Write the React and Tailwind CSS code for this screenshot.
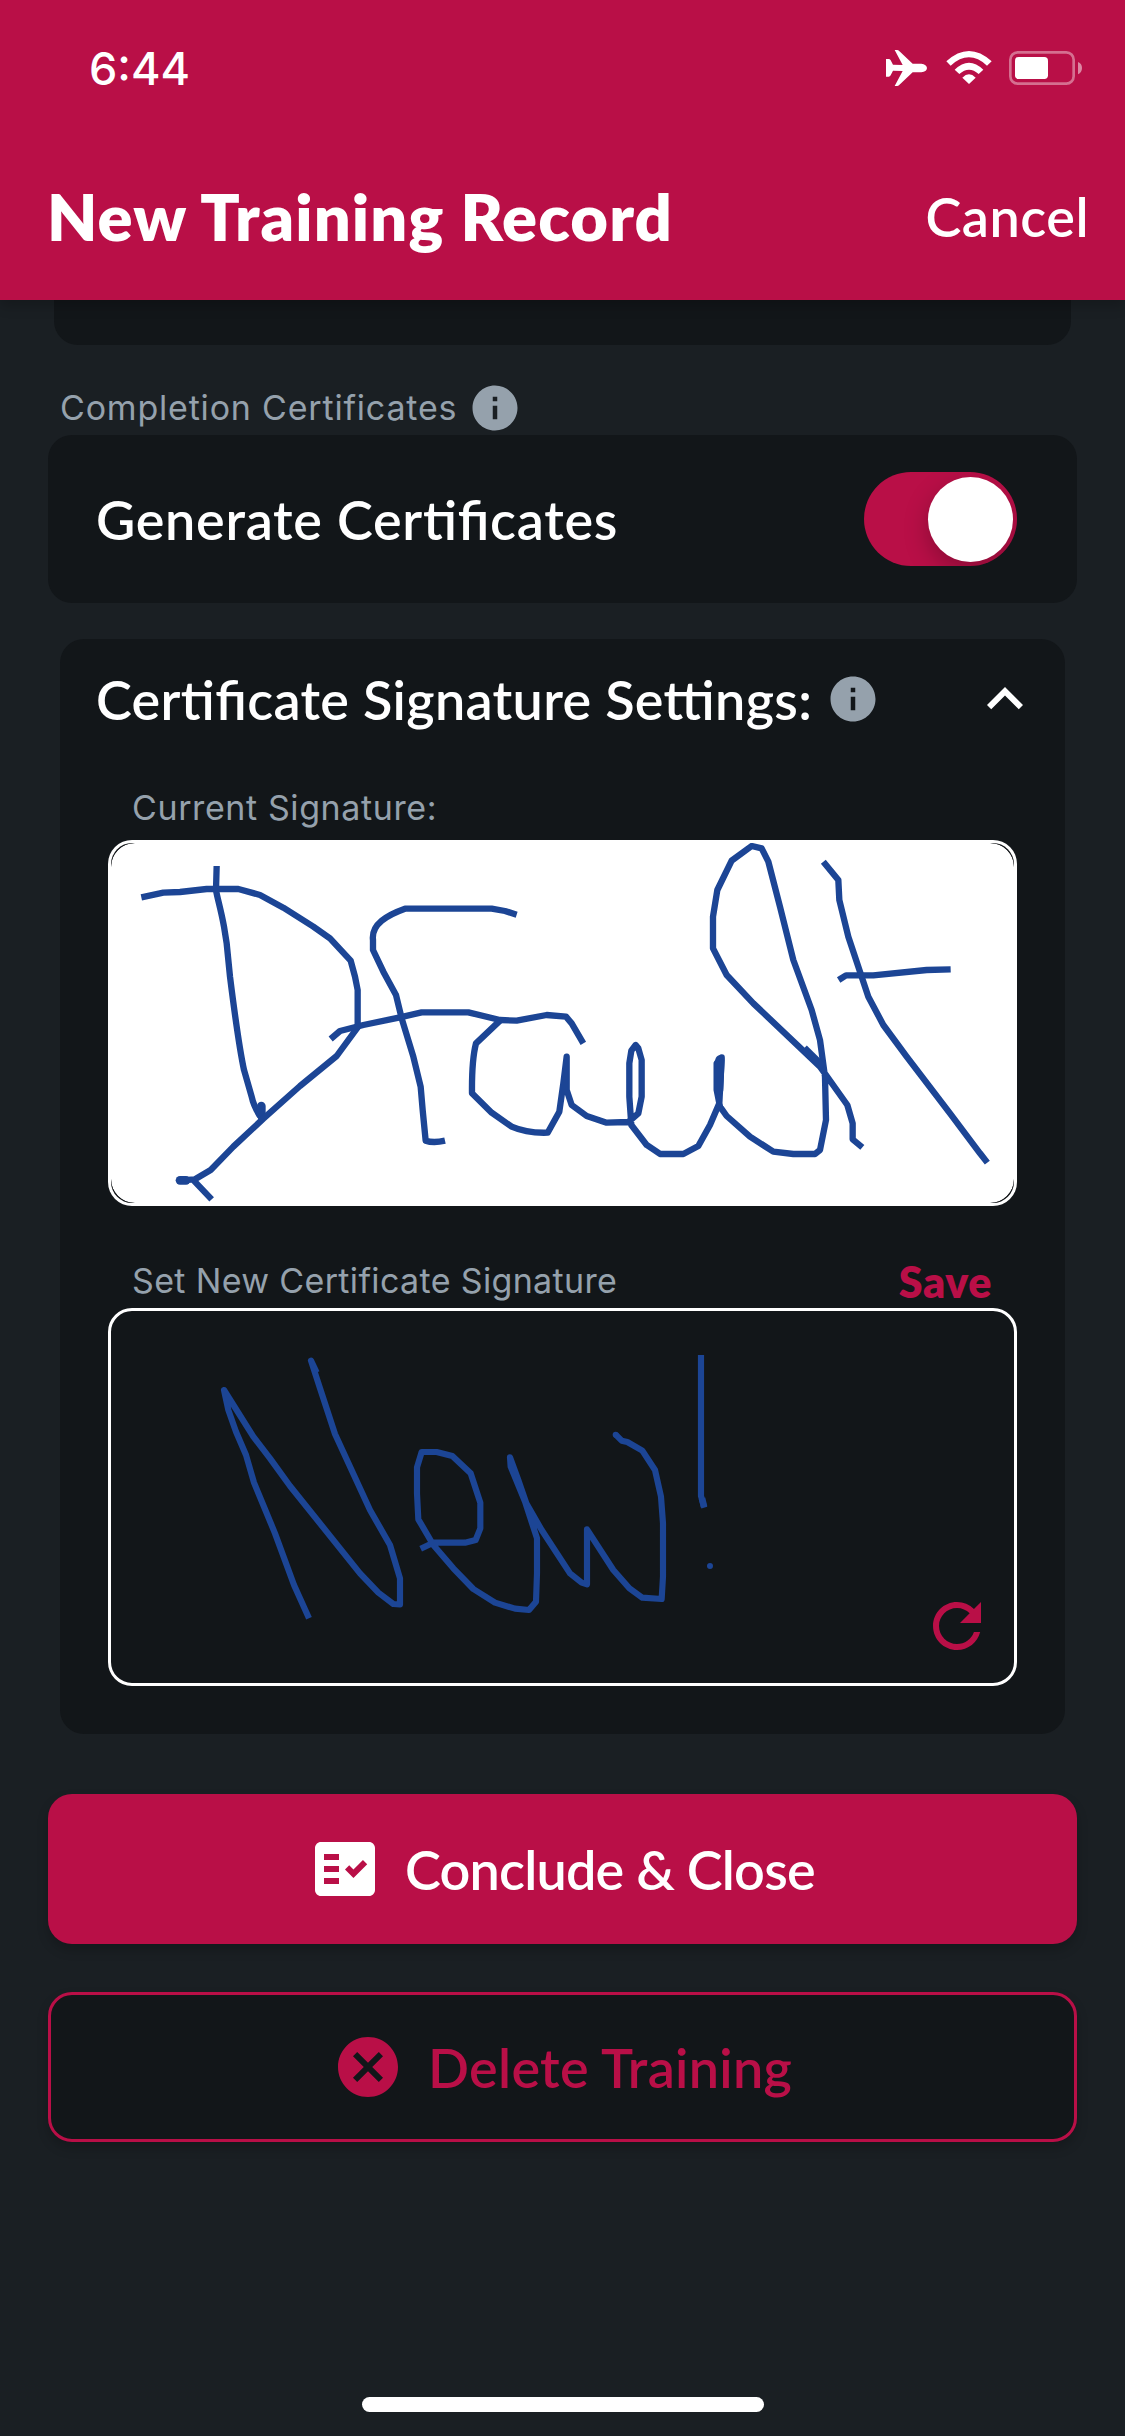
import React from "react";
import { MdInfo, MdRefresh, MdFactCheck, MdCancel } from "react-icons/md";

const heading = "font-['Lato',sans-serif] [font-feature-settings:'liga'_1] pt-[2px]";
const label =
  "font-['Inter',sans-serif] text-[34px] leading-none text-[#95a1ac] whitespace-nowrap";

function StatusIcons() {
  return (
    <svg className="h-[80px] w-[240px]" viewBox="0 0 720 240" fill="#fff">
      <path d="M78 90h8q4 0 6 4l7 13 29 1-24-45h8q4 0 8 5l38 36h26q16 2 17 13-1 11-17 13h-26l-38 36q-4 5-8 5h-8l24-45-29-1-7 14q-2 4-6 4h-8V117z" />
      <path d="M259 97Q327 35 395 97L381 110Q327 60 272 110z" />
      <path d="M284 122Q327 80 370 122L356 135Q327 109 298 135z" />
      <path d="M327 165L307 146Q327 126 347 146z" />
      <rect x="451" y="70" width="190" height="94" rx="22" fill="none" stroke="#fff" strokeOpacity=".4" strokeWidth="8" />
      <rect x="465" y="84" width="99" height="66" rx="11" />
      <path d="M654 99Q666 104 666 117T654 136z" fillOpacity=".5" />
    </svg>
  );
}

function Header() {
  return (
    <header className="relative z-10 h-[300px] bg-[#b90f47] text-white shadow-[0_6px_12px_rgba(0,0,0,0.2)]">
      <div className="flex h-[137px] items-center justify-between pl-[89px] pr-[25px]">
        <span className="font-['Inter',sans-serif] text-[45px] font-medium leading-none">6:44</span>
        <StatusIcons />
      </div>
      <div className="flex h-[157px] items-center justify-between pl-[47px] pr-[36px]">
        <h1 className={`${heading} whitespace-nowrap text-[65px] font-extrabold leading-none tracking-[1.1px]`}>
          New Training Record
        </h1>
        <button className={`${heading} text-[54px] font-semibold leading-none tracking-[0.5px]`}>Cancel</button>
      </div>
    </header>
  );
}

function Toggle() {
  return (
    <div className="flex h-[94px] w-[153px] items-center justify-end overflow-hidden rounded-full bg-[#b90f47] pr-[4px]">
      <div className="size-[85px] rounded-full bg-white shadow-[0_9px_24px_rgba(0,0,0,0.25)]" />
    </div>
  );
}

function CurrentSignature() {
  return (
    <div className="h-[366px] rounded-[24px] bg-white p-[3px]">
      <div className="h-full rounded-[21px] bg-[#111417]">
        <svg className="block h-full w-full overflow-hidden rounded-[24px]" viewBox="3 3 903 360">
          <rect x="3" y="3" width="903" height="360" rx="24" fill="#fff" />
          <g
            transform="translate(-8 -10) scale(.33333)"
            fill="none"
            stroke="#1c4595"
            strokeWidth="19"
            strokeLinejoin="round"
            strokeLinecap="butt"
          >
            <path d="M350 108L348 180C352 205 362 235 372 290L380 340L390 440C400 520 415 640 432 720L455 800Q460 825 478 855L488 866" />
            <path d="M484 828V856" strokeWidth="26" strokeLinecap="round" />
            <path d="M124 202L190 188L240 186L320 177H415L480 195L550 233L640 290L690 325L752 392L765 440L773 480V592L710 678L600 768L490 866L400 950L332 1020L285 1048L240 1051M278 1048L335 1108" />
            <path d="M240 1051H258" strokeWidth="26" strokeLinecap="round" />
            <path d="M1250 254L1215 243L1175 236H915Q870 252 845 272Q815 297 819 330V360L850 425L888 495L905 565L940 680L962 770L968 840L977 932Q1000 940 1035 932" />
            <path d="M692 627L720 603L790 585L900 562L965 547H1105L1200 570L1250 572L1340 555L1398 560L1415 580L1450 640" />
            <path d="M1200 572L1128 640Q1115 690 1116 790L1175 848L1235 890Q1280 910 1343 908L1378 845L1390 760L1400 680V780L1415 825L1460 858L1520 878L1585 876L1615 850L1625 800V690L1615 655L1607 645L1594 662L1588 700V800L1594 885L1640 945L1680 972H1750L1795 948L1830 885L1858 820L1865 682L1850 700V780L1860 830L1880 858L1950 920L2020 965L2080 972H2145L2160 960L2178 870L2175 740L2160 630L2135 540L2080 390L2040 230L2005 95L1985 55L1955 48L1895 92L1852 180L1839 260V355L1880 435L1960 520L2160 710L2242 825L2258 880V928L2287 952" />
            <path d="M1860 690L1856 780" strokeWidth="28" strokeLinecap="round" />
            <path d="M2112 655L2170 712" strokeWidth="24" />
            <path d="M2170 95L2215 150L2218 210L2245 320L2285 440L2305 500L2350 585L2420 680L2550 850L2640 970L2662 998" />
            <path d="M2216 450L2238 436H2320L2480 420L2552 418" />
          </g>
        </svg>
      </div>
    </div>
  );
}

function SignaturePad() {
  return (
    <div className="relative h-[378px] rounded-[24px] border-[3px] border-white">
      <svg className="block h-full w-full" viewBox="0 0 903 372">
        <g
          transform="translate(-21 -71) scale(.33333)"
          fill="none"
          stroke="#1c4595"
          strokeWidth="18.5"
          strokeLinejoin="round"
        >
          <path d="M657 1135L612 1035L555 880L492 728L468 645L438 575L415 510L402 450L490 590L540 655L600 738L810 1000L865 1058L910 1092L930 1093V1015L900 915L840 810L735 582L690 445L663 362L680 398" />
          <path d="M992 926L1030 908H1125L1157 900L1171 865V788L1142 700L1087 648L1040 636H995L981 682V760L985 838L1030 915L1090 985L1150 1047L1215 1088L1275 1106L1317 1110L1338 1085L1341 1000V895L1305 785L1262 680L1260 652L1285 720L1309 790L1355 870L1440 1000L1475 1028L1491 1033V868L1570 990L1618 1045L1657 1073L1715 1077L1719 1010V850L1713 770L1695 690L1657 632L1612 606L1595 602L1577 584" />
          <circle cx="1577" cy="584" r="9" fill="#1c4595" stroke="none" />
          <path d="M1833 345V768L1843 803" />
          <path d="M1836 775L1842 800" strokeWidth="20" />
          <circle cx="1860" cy="978" r="9" fill="#1c4595" stroke="none" />
        </g>
      </svg>
      <MdRefresh className="absolute bottom-[21px] right-[21px] size-[72px] text-[#b90f47]" />
    </div>
  );
}

export default function App() {
  return (
    <div className="flex h-[2436px] w-[1125px] flex-col overflow-hidden bg-[#1a1f23]">
      <Header />
      <main className="flex flex-col px-[48px]">
        <div className="mx-[6px] h-[45px] rounded-b-[24px] bg-[#121619]" />

        <div className="mt-[36px] flex h-[54px] items-center pl-[12px]">
          <span className={`${label} w-[408px] tracking-[0.8px]`}>Completion Certificates</span>
          <MdInfo className="size-[54px] text-[#95a1ac]" />
        </div>
        <section className="flex h-[168px] items-center justify-between rounded-[24px] bg-[#121619] pl-[48px] pr-[60px]">
          <span className={`${heading} text-[54px] font-semibold leading-none tracking-[0.7px] text-white`}>
            Generate Certificates
          </span>
          <Toggle />
        </section>

        <section className="mx-[12px] mt-[36px] rounded-[24px] bg-[#121619] px-[48px] pb-[48px]">
          <div className="-ml-[12px] -mr-[24px] flex h-[120px] items-center">
            <h2 className={`${heading} w-[730px] whitespace-nowrap text-[54px] font-semibold leading-none tracking-[0.3px] text-white`}>
              Certificate Signature Settings:
            </h2>
            <MdInfo className="size-[54px] text-[#95a1ac]" />
            <svg className="ml-auto size-[72px] text-white" viewBox="0 0 24 24" fill="currentColor">
              <path d="M12 8l-6 6 1.41 1.41L12 10.83l4.59 4.58L18 14z" />
            </svg>
          </div>
          <div className="mt-[15px] flex h-[66px] items-center pl-[24px] pt-[2px]">
            <span className={`${label} tracking-[0.6px]`}>Current Signature:</span>
          </div>
          <CurrentSignature />
          <div className="mt-[46px] flex h-[56px] items-center justify-between pl-[24px] pr-[25px]">
            <span className={`${label} pt-[1px] tracking-[0.35px]`}>Set New Certificate Signature</span>
            <button className={`${heading} text-[43px] font-extrabold leading-none tracking-[0.6px] text-[#b90f47]`}>
              Save
            </button>
          </div>
          <SignaturePad />
        </section>

        <button className="mt-[60px] flex h-[150px] items-center rounded-[24px] bg-[#b90f47] pl-[261px] text-white shadow-[0_6px_12px_rgba(0,0,0,0.2)]">
          <MdFactCheck className="size-[72px]" />
          <span className={`${heading} ml-[24px] text-[54px] font-semibold leading-none -tracking-[0.8px]`}>
            Conclude &amp; Close
          </span>
        </button>
        <button className="mt-[48px] flex h-[150px] items-center rounded-[24px] border-[3px] border-[#b90f47] bg-[#121619] pl-[281px] text-[#b90f47] shadow-[0_6px_12px_rgba(0,0,0,0.2)]">
          <MdCancel className="size-[72px]" />
          <span className={`${heading} ml-[24px] text-[54px] font-semibold leading-none tracking-[0.3px]`}>
            Delete Training
          </span>
        </button>
      </main>
      <div className="mb-[24px] ml-[362px] mt-auto h-[15px] w-[402px] rounded-full bg-white" />
    </div>
  );
}
